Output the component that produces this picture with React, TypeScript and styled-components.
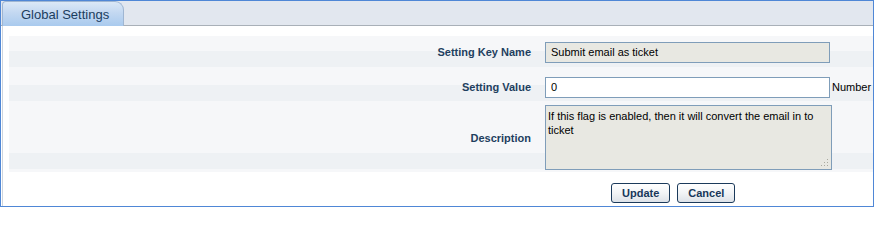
import React from 'react';
import styled, { createGlobalStyle } from 'styled-components';

const GlobalStyle = createGlobalStyle`
  html, body {
    margin: 0;
    padding: 0;
    background: #ffffff;
  }
  body {
    font-family: "Liberation Sans", Arial, sans-serif;
  }
`;

const Frame = styled.div`
  width: 874px;
  height: 207px;
  box-sizing: border-box;
  border: 1px solid #4f87d6;
  background: #ffffff;
  overflow: hidden;
`;

const TabBar = styled.div`
  height: 24px;
  display: flex;
  align-items: flex-end;
  background: #e2e7ef;
  border-bottom: 1px solid #a9b0b8;
`;

const Tab = styled.div`
  position: relative;
  z-index: 1;
  box-sizing: border-box;
  width: 122px;
  height: 25px;
  margin-left: 1px;
  margin-bottom: -1px;
  padding-left: 18px;
  display: flex;
  align-items: center;
  border: 1px solid #9fb6d2;
  border-bottom: none;
  border-radius: 4px 9px 0 0;
  background: linear-gradient(to bottom, #dbe8f7 0%, #c3d8f1 45%, #a9caee 100%);
  color: #1b3d5e;
  font-size: 13px;
`;

const Body = styled.div`
  margin-left: 1px;
  border-left: 1px solid #cdd5de;
  padding: 10px 0 0 6px;
  height: 180px;
`;

const FormTable = styled.div`
  display: flex;
  flex-direction: column;
`;

const Row = styled.div<{ $height: number; $padTop: number; $bandBottom?: number }>`
  box-sizing: border-box;
  display: grid;
  grid-template-columns: 530px 1fr;
  align-items: center;
  height: ${p => p.$height}px;
  padding-top: ${p => p.$padTop}px;
  padding-bottom: ${p => p.$bandBottom ?? 0}px;
  background-color: #f6f7f9;
  background-image: linear-gradient(#eef1f4, #eef1f4);
  background-repeat: no-repeat;
  background-size: 100% 16px;
  background-position: left bottom ${p => p.$bandBottom ?? 0}px;
`;

const Label = styled.div`
  text-align: right;
  padding-right: 8px;
  font-size: 11px;
  font-weight: bold;
  color: #1e3f5f;
`;

const Field = styled.div`
  display: flex;
  align-items: center;
  padding-left: 6px;
`;

const TextInput = styled.input<{ $readOnlyLook?: boolean }>`
  box-sizing: border-box;
  width: 285px;
  height: 21px;
  margin: 0;
  padding: 0 5px;
  border: 1px solid #7f9db9;
  border-radius: 0;
  background: ${p => (p.$readOnlyLook ? '#e8e8e2' : '#ffffff')};
  font-family: "Liberation Sans", Arial, sans-serif;
  font-size: 11px;
  color: #000000;
  outline: none;
`;

const Unit = styled.span`
  margin-left: 2px;
  font-size: 11px;
  color: #000000;
`;

const AreaWrap = styled.div`
  position: relative;
  width: 287px;
  height: 65px;
`;

const TextArea = styled.textarea`
  box-sizing: border-box;
  width: 100%;
  height: 100%;
  margin: 0;
  padding: 3px 2px;
  border: 1px solid #7f9db9;
  background: #e8e8e2;
  font-family: "Liberation Sans", Arial, sans-serif;
  font-size: 11px;
  line-height: 14px;
  color: #000000;
  resize: none;
  overflow: hidden;
  outline: none;
`;

const Grip = styled.svg`
  position: absolute;
  right: 3px;
  bottom: 3px;
  width: 9px;
  height: 9px;
`;

const ButtonRow = styled.div`
  display: grid;
  grid-template-columns: 530px 1fr;
  margin-top: 11px;
`;

const Buttons = styled.div`
  display: flex;
  gap: 7px;
  padding-left: 72px;
`;

const Button = styled.button`
  box-sizing: border-box;
  height: 20px;
  padding: 0 10px;
  margin: 0;
  border: 1px solid #1b3a5b;
  border-radius: 3px;
  background: linear-gradient(to bottom, #ffffff 0%, #f2f4f6 50%, #dde2e8 100%);
  font-family: "Liberation Sans", Arial, sans-serif;
  font-size: 11px;
  font-weight: bold;
  color: #17375a;
  cursor: pointer;
`;

export default function App() {
  return (
    <>
      <GlobalStyle />
      <Frame>
        <TabBar>
          <Tab>Global Settings</Tab>
        </TabBar>
        <Body>
          <FormTable>
            <Row $height={31} $padTop={1}>
              <Label>Setting Key Name</Label>
              <Field>
                <TextInput $readOnlyLook readOnly value="Submit email as ticket" />
              </Field>
            </Row>
            <Row $height={34} $padTop={6}>
              <Label>Setting Value</Label>
              <Field>
                <TextInput defaultValue="0" style={{ width: 285 }} />
                <Unit>Number</Unit>
              </Field>
            </Row>
            <Row $height={71} $padTop={4} $bandBottom={3}>
              <Label>Description</Label>
              <Field>
                <AreaWrap>
                  <TextArea
                    readOnly
                    value="If this flag is enabled, then it will convert the email in to ticket"
                  />
                  <Grip viewBox="0 0 9 9">
                    <rect x="7" y="1" width="1" height="1" fill="#a9a99f" />
                    <rect x="4" y="4" width="1" height="1" fill="#a9a99f" />
                    <rect x="7" y="4" width="1" height="1" fill="#a9a99f" />
                    <rect x="1" y="7" width="1" height="1" fill="#a9a99f" />
                    <rect x="4" y="7" width="1" height="1" fill="#a9a99f" />
                    <rect x="7" y="7" width="1" height="1" fill="#a9a99f" />
                  </Grip>
                </AreaWrap>
              </Field>
            </Row>
          </FormTable>
          <ButtonRow>
            <div />
            <Buttons>
              <Button>Update</Button>
              <Button>Cancel</Button>
            </Buttons>
          </ButtonRow>
        </Body>
      </Frame>
    </>
  );
}
